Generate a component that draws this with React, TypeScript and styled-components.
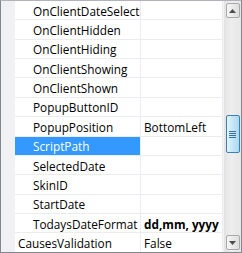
import React from 'react'
import styled, { createGlobalStyle } from 'styled-components'

const GlobalStyle = createGlobalStyle`
  html, body {
    margin: 0;
    padding: 0;
    background: #ffffff;
  }
`

const color = {
  frame: '#828790',
  gutter: '#f0f0f5',
  line: '#ebecf0',
  text: '#000000',
  selected: '#3399ff',
  track: '#e9e9e9',
}

const GridWrapper = styled.div`
  display: flex;
  width: 242px;
  height: 253px;
  box-sizing: border-box;
  border: 1px solid ${color.frame};
  border-top-color: #b0b3ba;
  background: #ffffff;
  overflow: hidden;
  font-family: 'Open Sans', 'Noto Sans', sans-serif;
  font-size: 11.8px;
  color: ${color.text};
`

const RowList = styled.div`
  flex: 1;
  display: flex;
  flex-direction: column;
  min-width: 0;
`

const Row = styled.div`
  display: grid;
  grid-template-columns: 14px 126px 1fr;
  height: 19.36px;
  flex-shrink: 0;
`

const Gutter = styled.div`
  background: ${color.gutter};
`

const NameCell = styled.div<{ $nested: boolean; $selected: boolean }>`
  display: flex;
  align-items: center;
  box-sizing: border-box;
  padding-left: ${p => (p.$nested ? '18px' : '3px')};
  padding-top: 1px;
  border-right: 1px solid ${color.line};
  border-bottom: 1px solid ${color.line};
  background: ${p => (p.$selected ? color.selected : 'transparent')};
  color: ${p => (p.$selected ? '#ffffff' : color.text)};
  white-space: nowrap;
  overflow: hidden;
`

const ValueCell = styled.div<{ $bold: boolean }>`
  display: flex;
  align-items: center;
  box-sizing: border-box;
  padding-left: 3px;
  padding-top: 1px;
  border-right: 1px solid ${color.line};
  border-bottom: 1px solid ${color.line};
  font-weight: ${p => (p.$bold ? 700 : 400)};
  white-space: nowrap;
  overflow: hidden;
`

const ScrollBar = styled.div`
  width: 18px;
  flex-shrink: 0;
  display: flex;
  flex-direction: column;
  align-items: center;
  padding: 2px 0 2px;
  box-sizing: border-box;
  background: linear-gradient(to right, #e3e3e3, #eeeeee 40%, #e6e6e6);
  border-left: 1px solid #f4f4f4;
`

const ArrowButton = styled.div`
  width: 14px;
  height: 15px;
  box-sizing: border-box;
  border: 1px solid #a9a9a9;
  border-radius: 2px;
  background: linear-gradient(to right, #f6f6f6, #e9e9e9 50%, #dedede);
  display: flex;
  align-items: center;
  justify-content: center;
  flex-shrink: 0;
`

const Track = styled.div`
  flex: 1;
  width: 100%;
  display: flex;
  flex-direction: column;
  align-items: center;
  padding-top: 97px;
`

const Thumb = styled.div`
  width: 14px;
  height: 38px;
  box-sizing: border-box;
  border: 1px solid #3c7fb1;
  border-radius: 2px;
  background: linear-gradient(to right, #e3f4fc, #c4e5f6 50%, #a9d9f2);
  display: flex;
  align-items: center;
  justify-content: center;
`

type Prop = {
  name: string
  value?: string
  nested?: boolean
  bold?: boolean
  selected?: boolean
}

const props: Prop[] = [
  { name: 'OnClientDateSelection', nested: true },
  { name: 'OnClientHidden', nested: true },
  { name: 'OnClientHiding', nested: true },
  { name: 'OnClientShowing', nested: true },
  { name: 'OnClientShown', nested: true },
  { name: 'PopupButtonID', nested: true },
  { name: 'PopupPosition', value: 'BottomLeft', nested: true },
  { name: 'ScriptPath', nested: true, selected: true },
  { name: 'SelectedDate', nested: true },
  { name: 'SkinID', nested: true },
  { name: 'StartDate', nested: true },
  { name: 'TodaysDateFormat', value: 'dd,mm, yyyy', nested: true, bold: true },
  { name: 'CausesValidation', value: 'False' },
]

const App: React.FC = () => {
  return (
    <>
      <GlobalStyle />
      <GridWrapper>
        <RowList>
          {props.map(p => (
            <Row key={p.name}>
              <Gutter />
              <NameCell $nested={!!p.nested} $selected={!!p.selected}>
                {p.name}
              </NameCell>
              <ValueCell $bold={!!p.bold}>{p.value}</ValueCell>
            </Row>
          ))}
        </RowList>
        <ScrollBar>
          <ArrowButton>
            <svg width="7" height="4" viewBox="0 0 7 4">
              <path d="M3.5 0 L7 4 L0 4 Z" fill="#4d4d4d" />
            </svg>
          </ArrowButton>
          <Track>
            <Thumb>
              <svg width="7" height="7" viewBox="0 0 7 7">
                <path d="M0 0.5 H7 M0 2.5 H7 M0 4.5 H7 M0 6.5 H7" stroke="#3c6e98" strokeWidth="1" />
              </svg>
            </Thumb>
          </Track>
          <ArrowButton>
            <svg width="7" height="4" viewBox="0 0 7 4">
              <path d="M0 0 L7 0 L3.5 4 Z" fill="#4d4d4d" />
            </svg>
          </ArrowButton>
        </ScrollBar>
      </GridWrapper>
    </>
  )
}

export default App
